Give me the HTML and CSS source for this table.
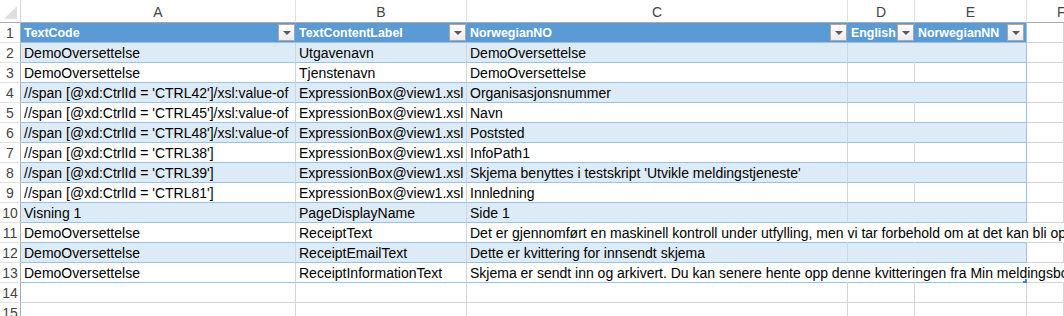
FILE: index.html
```html
<!DOCTYPE html>
<html lang="no">
<head>
<meta charset="utf-8">
<title>Sheet</title>
<link rel="stylesheet" href="styles.css">
</head>
<body>
<div class="sheet">
  <div class="corner"></div>
  <div class="ch">A</div><div class="ch">B</div><div class="ch">C</div><div class="ch">D</div><div class="ch">E</div><div class="ch last">F</div>

  <div class="rh">1</div>
  <div class="th"><span>TextCode</span><i class="fb"></i></div>
  <div class="th"><span>TextContentLabel</span><i class="fb"></i></div>
  <div class="th"><span>NorwegianNO</span><i class="fb"></i></div>
  <div class="th"><span>English</span><i class="fb"></i></div>
  <div class="th te"><span>NorwegianNN</span><i class="fb"></i></div>
  <div class="c out"></div>

  <div class="rh">2</div>
  <div class="c b">DemoOversettelse</div><div class="c b">Utgavenavn</div><div class="c b">DemoOversettelse</div><div class="c b nv"></div><div class="c b te"></div><div class="c out"></div>

  <div class="rh">3</div>
  <div class="c w">DemoOversettelse</div><div class="c w">Tjenstenavn</div><div class="c w">DemoOversettelse</div><div class="c w"></div><div class="c w te"></div><div class="c out"></div>

  <div class="rh">4</div>
  <div class="c b">//span [@xd:CtrlId = 'CTRL42']/xsl:value-of</div><div class="c b">ExpressionBox@view1.xsl</div><div class="c b">Organisasjonsnummer</div><div class="c b nv"></div><div class="c b te"></div><div class="c out"></div>

  <div class="rh">5</div>
  <div class="c w">//span [@xd:CtrlId = 'CTRL45']/xsl:value-of</div><div class="c w">ExpressionBox@view1.xsl</div><div class="c w">Navn</div><div class="c w"></div><div class="c w te"></div><div class="c out"></div>

  <div class="rh">6</div>
  <div class="c b">//span [@xd:CtrlId = 'CTRL48']/xsl:value-of</div><div class="c b">ExpressionBox@view1.xsl</div><div class="c b">Poststed</div><div class="c b nv"></div><div class="c b te"></div><div class="c out"></div>

  <div class="rh">7</div>
  <div class="c w">//span [@xd:CtrlId = 'CTRL38']</div><div class="c w">ExpressionBox@view1.xsl</div><div class="c w">InfoPath1</div><div class="c w"></div><div class="c w te"></div><div class="c out"></div>

  <div class="rh">8</div>
  <div class="c b">//span [@xd:CtrlId = 'CTRL39']</div><div class="c b">ExpressionBox@view1.xsl</div><div class="c b">Skjema benyttes i testskript 'Utvikle meldingstjeneste'</div><div class="c b nv"></div><div class="c b te"></div><div class="c out"></div>

  <div class="rh">9</div>
  <div class="c w">//span [@xd:CtrlId = 'CTRL81']</div><div class="c w">ExpressionBox@view1.xsl</div><div class="c w">Innledning</div><div class="c w"></div><div class="c w te"></div><div class="c out"></div>

  <div class="rh">10</div>
  <div class="c b">Visning 1</div><div class="c b">PageDisplayName</div><div class="c b">Side 1</div><div class="c b nv"></div><div class="c b te"></div><div class="c out"></div>

  <div class="rh">11</div>
  <div class="c w">DemoOversettelse</div><div class="c w">ReceiptText</div><div class="c w spill">Det er gjennomført en maskinell kontroll under utfylling, men vi tar forbehold om at det kan bli oppdaget feil under saksbehandlingen</div><div class="c w nv"></div><div class="c w nv"></div><div class="c out nv"></div>

  <div class="rh">12</div>
  <div class="c b">DemoOversettelse</div><div class="c b">ReceiptEmailText</div><div class="c b">Dette er kvittering for innsendt skjema</div><div class="c b nv"></div><div class="c b te"></div><div class="c out"></div>

  <div class="rh">13</div>
  <div class="c w">DemoOversettelse</div><div class="c w">ReceiptInformationText</div><div class="c w spill">Skjema er sendt inn og arkivert. Du kan senere hente opp denne kvitteringen fra Min meldingsboks</div><div class="c w nv"></div><div class="c w nv handle"></div><div class="c out nv"></div>

  <div class="rh">14</div>
  <div class="c g"></div><div class="c g"></div><div class="c g"></div><div class="c g"></div><div class="c g"></div><div class="c g"></div>

  <div class="rh">15</div>
  <div class="c g"></div><div class="c g"></div><div class="c g"></div><div class="c g"></div><div class="c g"></div><div class="c g"></div>
</div>
</body>
</html>
```

FILE: styles.css
```css
html, body {
  margin: 0;
  padding: 0;
  overflow: hidden;
  background: #ffffff;
}

.sheet {
  display: grid;
  grid-template-columns: 21px 275px 171px 381px 67px 112px 1fr;
  grid-template-rows: 23px;
  grid-auto-rows: 20px;
  width: 1064px;
  height: 316px;
  overflow: hidden;
  font-family: "Liberation Sans", Arial, sans-serif;
  font-size: 14px;
  color: #000;
}

.sheet > * {
  box-sizing: border-box;
  min-width: 0;
}

.corner {
  border-right: 1px solid #d5d5d5;
  border-bottom: 1px solid #ababab;
  background: #fff;
  position: relative;
}
.corner::after {
  content: "";
  position: absolute;
  right: 3px;
  bottom: 3px;
  width: 0;
  height: 0;
  border-left: 13px solid transparent;
  border-bottom: 13px solid #dfdfdf;
}

.ch {
  display: flex;
  align-items: center;
  justify-content: center;
  color: #444;
  font-size: 14px;
  border-right: 1px solid #e1e1e1;
  border-bottom: 1px solid #ababab;
  padding-top: 1px;
}
.ch.last {
  justify-content: flex-start;
  padding-left: 30px;
  border-right: none;
}

.rh {
  display: flex;
  align-items: center;
  justify-content: center;
  color: #444;
  font-size: 14px;
  border-right: 1px solid #ababab;
  border-bottom: 1px solid #e1e1e1;
}

.th {
  background: #5b9bd5;
  color: #fff;
  font-weight: bold;
  font-size: 12.4px;
  display: flex;
  align-items: center;
  gap: 1px;
  padding: 0 1px 0 3px;
  border-bottom: 1px solid #9bc2e6;
  white-space: nowrap;
}
.th span {
  flex: 1;
  overflow: visible;
}
.th.te {
  border-right: 1px solid #9bc2e6;
  padding-right: 2px;
}

.fb {
  flex: none;
  width: 17px;
  height: 17px;
  box-sizing: border-box;
  border: 1px solid #a8a8a8;
  background: linear-gradient(#ffffff, #ececec);
  display: flex;
  align-items: center;
  justify-content: center;
}
.fb::after {
  content: "";
  width: 0;
  height: 0;
  border-left: 4px solid transparent;
  border-right: 4px solid transparent;
  border-top: 4px solid #595959;
  margin-top: 1px;
}

.c {
  display: flex;
  align-items: center;
  padding: 0 3px;
  white-space: nowrap;
  overflow: hidden;
  border-right: 1px solid #d4d4d4;
  border-bottom: 1px solid #9bc2e6;
}
.c.b {
  background: #ddebf7;
  border-right-color: #c9d7e6;
}
.c.b.nv {
  border-right-color: #ddebf7;
}
.c.te {
  border-right: 1px solid #9bc2e6;
}
.c.out {
  border-bottom-color: #d4d4d4;
}
.c.g {
  border-bottom-color: #d4d4d4;
}
.c.spill {
  overflow: visible;
  border-right-color: transparent;
}
.c.w.nv {
  border-right-color: transparent;
}
.c.out.nv {
  border-right-color: transparent;
}
.c.handle {
  position: relative;
  overflow: visible;
}
.c.handle::after {
  content: "";
  position: absolute;
  right: -1px;
  bottom: -1px;
  width: 4px;
  height: 4px;
  border-right: 2px solid #4a7ebb;
  border-bottom: 2px solid #4a7ebb;
  box-sizing: border-box;
}
```
